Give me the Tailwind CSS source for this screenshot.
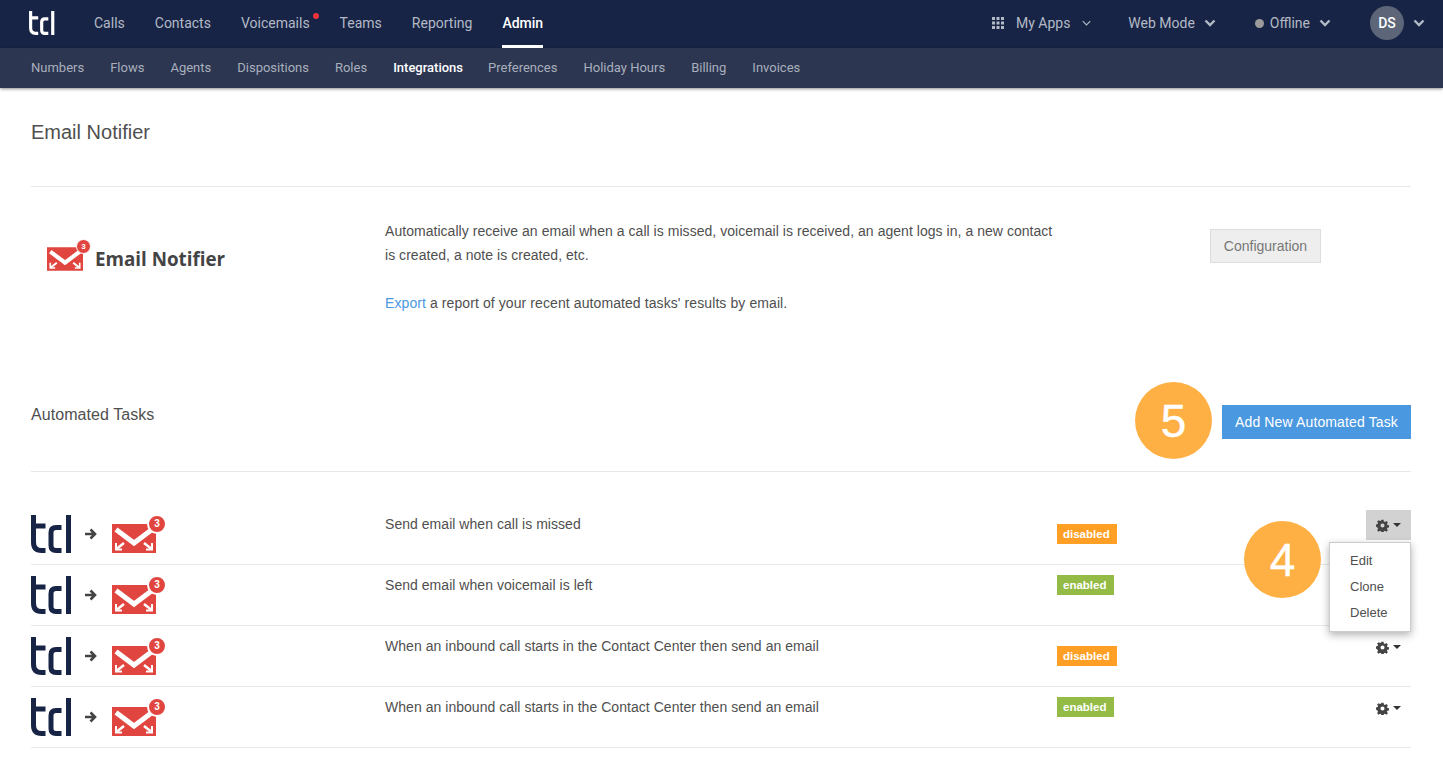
<!DOCTYPE html>
<html lang="en">
<head>
  <meta charset="UTF-8" />
  <script src="https://cdn.jsdelivr.net/npm/@tailwindcss/browser@4"></script>
  <title>Email Notifier</title>
</head>
<body class="bg-white h-[757px] overflow-hidden relative font-['Liberation_Sans',sans-serif] text-[#4f4f4f]">
  <svg class="hidden">
    <symbol id="tdl" viewBox="0 0 41 38">
      <path d="M2.500 0v27q0 8.500 8 8.500h4M0 11h14.500M30.500 12.500h-5.500q-5 0-5 5v13q0 5 5 5h5.500M37.500 0v38" fill="none" stroke="currentColor" stroke-width="5" />
    </symbol>
    <symbol id="mail" viewBox="0 0 44 29">
      <path fill="#e0463f" d="M0 0h44v29H0z" />
      <path d="M4 5.500l18 13.500L40 5.500" fill="none" stroke="#fff" stroke-width="5" />
      <path d="M5 24.500l7-5.500M39 24.500L32 19" fill="none" stroke="#fff" stroke-width="2.500" />
      <path d="M4 19v6.500h6M40 19v6.500h-6" fill="none" stroke="#fff" stroke-width="2" />
    </symbol>
    <symbol id="gear" viewBox="0 0 16 16">
      <path fill="#444" fill-rule="evenodd" d="M6.700 1h2.600l.4 2 1.300.6 1.800-1.100 1.800 1.800-1.100 1.800.6 1.300 1.900.4v2.600l-2 .4-.5 1.300 1.100 1.800-1.800 1.800-1.800-1.100-1.300.6-.4 1.900H6.700l-.4-2-1.300-.5-1.800 1.100-1.800-1.800 1.100-1.800-.6-1.300L0 9.300V6.700l2-.4.5-1.300-1.100-1.800 1.800-1.800L5 2.500l1.300-.6zM8 5.500a2.500 2.500 0 1 0 0 5 2.500 2.500 0 0 0 0-5z" />
    </symbol>
    <symbol id="chev" viewBox="0 0 12 8">
      <path d="M1.500 1.500L6 6l4.500-4.500" fill="none" stroke="currentColor" stroke-width="2.400" />
    </symbol>
    <symbol id="arrow" viewBox="0 0 12 12">
      <path d="M0 6h9M5.500 1.500L10 6l-4.500 4.500" fill="none" stroke="#444" stroke-width="2.600" />
    </symbol>
  </svg>

  <!-- top nav -->
  <header class="h-12 bg-[#172445] flex items-center pl-[29px] pr-[18px] pb-[2px] font-['Roboto',sans-serif] text-sm text-[#b3bac6]">
    <svg class="w-[26px] h-6 text-white mr-[39px]" viewBox="0 0 41 38"><use href="#tdl" /></svg>
    <nav class="flex h-12 items-center gap-[30px]">
      <a>Calls</a>
      <a>Contacts</a>
      <a class="relative">Voicemails<span class="absolute -right-[9px] top-0 w-[6px] h-[6px] rounded-full bg-[#f0323c]"></span></a>
      <a>Teams</a>
      <a>Reporting</a>
      <a class="h-12 flex items-center border-b-[3px] border-white text-white font-medium translate-y-[1px] pt-[1px]">Admin</a>
    </nav>
    <div class="ml-auto flex items-center">
      <svg class="w-3 h-3 text-[#b3bac6] mr-[12px]" viewBox="0 0 12 12" fill="currentColor">
        <path d="M0 0h3v3H0zM4.500 0h3v3h-3zM9 0h3v3H9zM0 4.500h3v3H0zM4.500 4.500h3v3h-3zM9 4.500h3v3H9zM0 9h3v3H0zM4.500 9h3v3h-3zM9 9h3v3H9z" />
      </svg>
      <span>My Apps</span>
      <svg class="w-[9px] h-[6px] ml-[12px] mr-[37px]" viewBox="0 0 12 8"><path d="M1 1.500L6 6.500l5-5" fill="none" stroke="currentColor" stroke-width="1.500" /></svg>
      <span>Web Mode</span>
      <svg class="w-3 h-2 ml-[9px] mr-[39px]"><use href="#chev" /></svg>
      <span class="w-[9px] h-[9px] rounded-full bg-[#9b9b9b] mr-[6px]"></span>
      <span>Offline</span>
      <svg class="w-3 h-2 ml-[9px] mr-[39px]"><use href="#chev" /></svg>
      <span class="w-[34px] h-[34px] rounded-full bg-[#5d6579] text-white font-medium flex items-center justify-center">DS</span>
      <svg class="w-3 h-2 ml-[9px]"><use href="#chev" /></svg>
    </div>
  </header>

  <!-- sub nav -->
  <nav class="h-10 bg-[#2c3651] flex items-center gap-[26px] pl-[31px] font-['Roboto',sans-serif] text-[13px] text-[#a9afbc] shadow-[0_1px_3px_rgba(0,0,0,0.45)]">
    <a>Numbers</a>
    <a>Flows</a>
    <a>Agents</a>
    <a>Dispositions</a>
    <a>Roles</a>
    <a class="text-white font-medium -mr-px">Integrations</a>
    <a>Preferences</a>
    <a>Holiday Hours</a>
    <a>Billing</a>
    <a>Invoices</a>
  </nav>

  <main class="pl-[31px] pr-[32px]">
    <h1 class="h-[99px] border-b border-[#e8e8e8] pt-[33px] text-[20px] leading-[23px]">Email Notifier</h1>

    <section class="h-[184px] grid grid-cols-[354px_1fr]">
      <div class="flex items-start pt-[52px] pl-4">
        <span class="relative mt-[8px] w-[36px] h-[24px]">
          <svg class="w-[36px] h-[24px]"><use href="#mail" /></svg>
          <span class="absolute -right-[8px] -top-[8px] w-[15px] h-[15px] rounded-full bg-[#e0463f] border border-white text-white text-[8px] font-bold leading-[13px] text-center">3</span>
        </span>
        <span class="ml-[12px] mt-[7px] font-['Open_Sans',sans-serif] font-bold text-[18.800px] leading-[26px] text-[#444]">Email Notifier</span>
      </div>
      <div class="flex items-start">
        <div class="w-[672px] pt-[32px] text-sm leading-6 tracking-[0.04px]">
          <p>Automatically receive an email when a call is missed, voicemail is received, an agent logs in, a new contact is created, a note is created, etc.</p>
          <p class="mt-6 tracking-[0.09px]"><a class="text-[#4a98e0]">Export</a> a report of your recent automated tasks' results by email.</p>
        </div>
        <button class="ml-[153px] mt-[42px] w-[111px] h-[34px] bg-[#eee] border border-[#ddd] text-sm text-[#777]">Configuration</button>
      </div>
    </section>

    <section class="h-[101px] flex justify-between border-b border-[#e8e8e8]">
      <h2 class="pt-[33px] text-base leading-[22px] tracking-[0.06px]">Automated Tasks</h2>
      <button class="mt-[34px] w-[189px] h-[34px] bg-[#4a98e0] text-white text-sm tracking-[0.13px]">Add New Automated Task</button>
    </section>

    <section class="pt-8">
      <div class="h-[61px] grid grid-cols-[354px_672px_1fr] border-b border-[#e8e8e8]">
        <div class="flex items-start pt-[11px]">
          <svg class="w-[41px] h-[38px] text-[#172445]"><use href="#tdl" /></svg>
          <svg class="ml-[13px] mt-[13px] w-3 h-3"><use href="#arrow" /></svg>
          <span class="relative ml-[15px] mt-[9px] w-[44px] h-[29px]">
            <svg class="w-[44px] h-[29px]"><use href="#mail" /></svg>
            <span class="absolute -right-[11px] -top-[10px] w-[20px] h-[20px] rounded-full bg-[#e0463f] border-2 border-white text-white text-[10px] font-bold leading-[16px] text-center">3</span>
          </span>
        </div>
        <p class="text-sm leading-5 pt-[10px] tracking-[0.04px]">Send email when call is missed</p>
        <div class="flex justify-between items-start">
          <span class="mt-5 h-5 pl-[6px] pr-[7px] bg-[#ff9f26] text-white text-[11.500px] font-bold leading-5">disabled</span>
          <button class="w-[45px] h-[30px] mt-[6px] bg-[#d2d2d2] flex items-center justify-center gap-[4px]">
            <svg class="w-[13px] h-[13px]"><use href="#gear" /></svg>
            <span class="border-x-[4px] border-t-[4px] border-x-transparent border-t-[#333]"></span>
          </button>
        </div>
      </div>
      <div class="h-[61px] grid grid-cols-[354px_672px_1fr] border-b border-[#e8e8e8]">
        <div class="flex items-start pt-[11px]">
          <svg class="w-[41px] h-[38px] text-[#172445]"><use href="#tdl" /></svg>
          <svg class="ml-[13px] mt-[13px] w-3 h-3"><use href="#arrow" /></svg>
          <span class="relative ml-[15px] mt-[9px] w-[44px] h-[29px]">
            <svg class="w-[44px] h-[29px]"><use href="#mail" /></svg>
            <span class="absolute -right-[11px] -top-[10px] w-[20px] h-[20px] rounded-full bg-[#e0463f] border-2 border-white text-white text-[10px] font-bold leading-[16px] text-center">3</span>
          </span>
        </div>
        <p class="text-sm leading-5 pt-[10px] tracking-[0.04px]">Send email when voicemail is left</p>
        <div class="flex justify-between items-start">
          <span class="mt-[10px] h-5 pl-[6px] pr-[8px] bg-[#94bb46] text-white text-[11.500px] font-bold leading-5">enabled</span>
        </div>
      </div>
      <div class="h-[61px] grid grid-cols-[354px_672px_1fr] border-b border-[#e8e8e8]">
        <div class="flex items-start pt-[11px]">
          <svg class="w-[41px] h-[38px] text-[#172445]"><use href="#tdl" /></svg>
          <svg class="ml-[13px] mt-[13px] w-3 h-3"><use href="#arrow" /></svg>
          <span class="relative ml-[15px] mt-[9px] w-[44px] h-[29px]">
            <svg class="w-[44px] h-[29px]"><use href="#mail" /></svg>
            <span class="absolute -right-[11px] -top-[10px] w-[20px] h-[20px] rounded-full bg-[#e0463f] border-2 border-white text-white text-[10px] font-bold leading-[16px] text-center">3</span>
          </span>
        </div>
        <p class="text-sm leading-5 pt-[10px] tracking-[0.04px]">When an inbound call starts in the Contact Center then send an email</p>
        <div class="flex justify-between items-start">
          <span class="mt-5 h-5 pl-[6px] pr-[7px] bg-[#ff9f26] text-white text-[11.500px] font-bold leading-5">disabled</span>
          <button class="w-[45px] h-[30px] mt-[6px] flex items-center justify-center gap-[4px]">
            <svg class="w-[13px] h-[13px]"><use href="#gear" /></svg>
            <span class="border-x-[4px] border-t-[4px] border-x-transparent border-t-[#333]"></span>
          </button>
        </div>
      </div>
      <div class="h-[61px] grid grid-cols-[354px_672px_1fr] border-b border-[#e8e8e8]">
        <div class="flex items-start pt-[11px]">
          <svg class="w-[41px] h-[38px] text-[#172445]"><use href="#tdl" /></svg>
          <svg class="ml-[13px] mt-[13px] w-3 h-3"><use href="#arrow" /></svg>
          <span class="relative ml-[15px] mt-[9px] w-[44px] h-[29px]">
            <svg class="w-[44px] h-[29px]"><use href="#mail" /></svg>
            <span class="absolute -right-[11px] -top-[10px] w-[20px] h-[20px] rounded-full bg-[#e0463f] border-2 border-white text-white text-[10px] font-bold leading-[16px] text-center">3</span>
          </span>
        </div>
        <p class="text-sm leading-5 pt-[10px] tracking-[0.04px]">When an inbound call starts in the Contact Center then send an email</p>
        <div class="flex justify-between items-start">
          <span class="mt-[10px] h-5 pl-[6px] pr-[8px] bg-[#94bb46] text-white text-[11.500px] font-bold leading-5">enabled</span>
          <button class="w-[45px] h-[30px] mt-[6px] flex items-center justify-center gap-[4px]">
            <svg class="w-[13px] h-[13px]"><use href="#gear" /></svg>
            <span class="border-x-[4px] border-t-[4px] border-x-transparent border-t-[#333]"></span>
          </button>
        </div>
      </div>
    </section>
  </main>

  <!-- dropdown + annotation circles sit over the page -->
  <div class="absolute left-[1329px] top-[542px] w-[82px] h-[90px] bg-white border border-[#ccc] shadow-[0_3px_8px_rgba(0,0,0,0.3)] pl-5 pt-[5px] text-[13px] leading-[26px]">
    <div>Edit</div>
    <div>Clone</div>
    <div>Delete</div>
  </div>
  <div class="absolute left-[1135px] top-[382px] w-[77px] h-[77px] rounded-full bg-[#ffb045] text-white text-[46px] pt-[2px] [-webkit-text-stroke:0.4px_white] flex items-center justify-center">5</div>
  <div class="absolute left-[1244px] top-[521px] w-[77px] h-[77px] rounded-full bg-[#ffb045] text-white text-[46px] pt-[2px] [-webkit-text-stroke:0.4px_white] flex items-center justify-center">4</div>
</body>
</html>
